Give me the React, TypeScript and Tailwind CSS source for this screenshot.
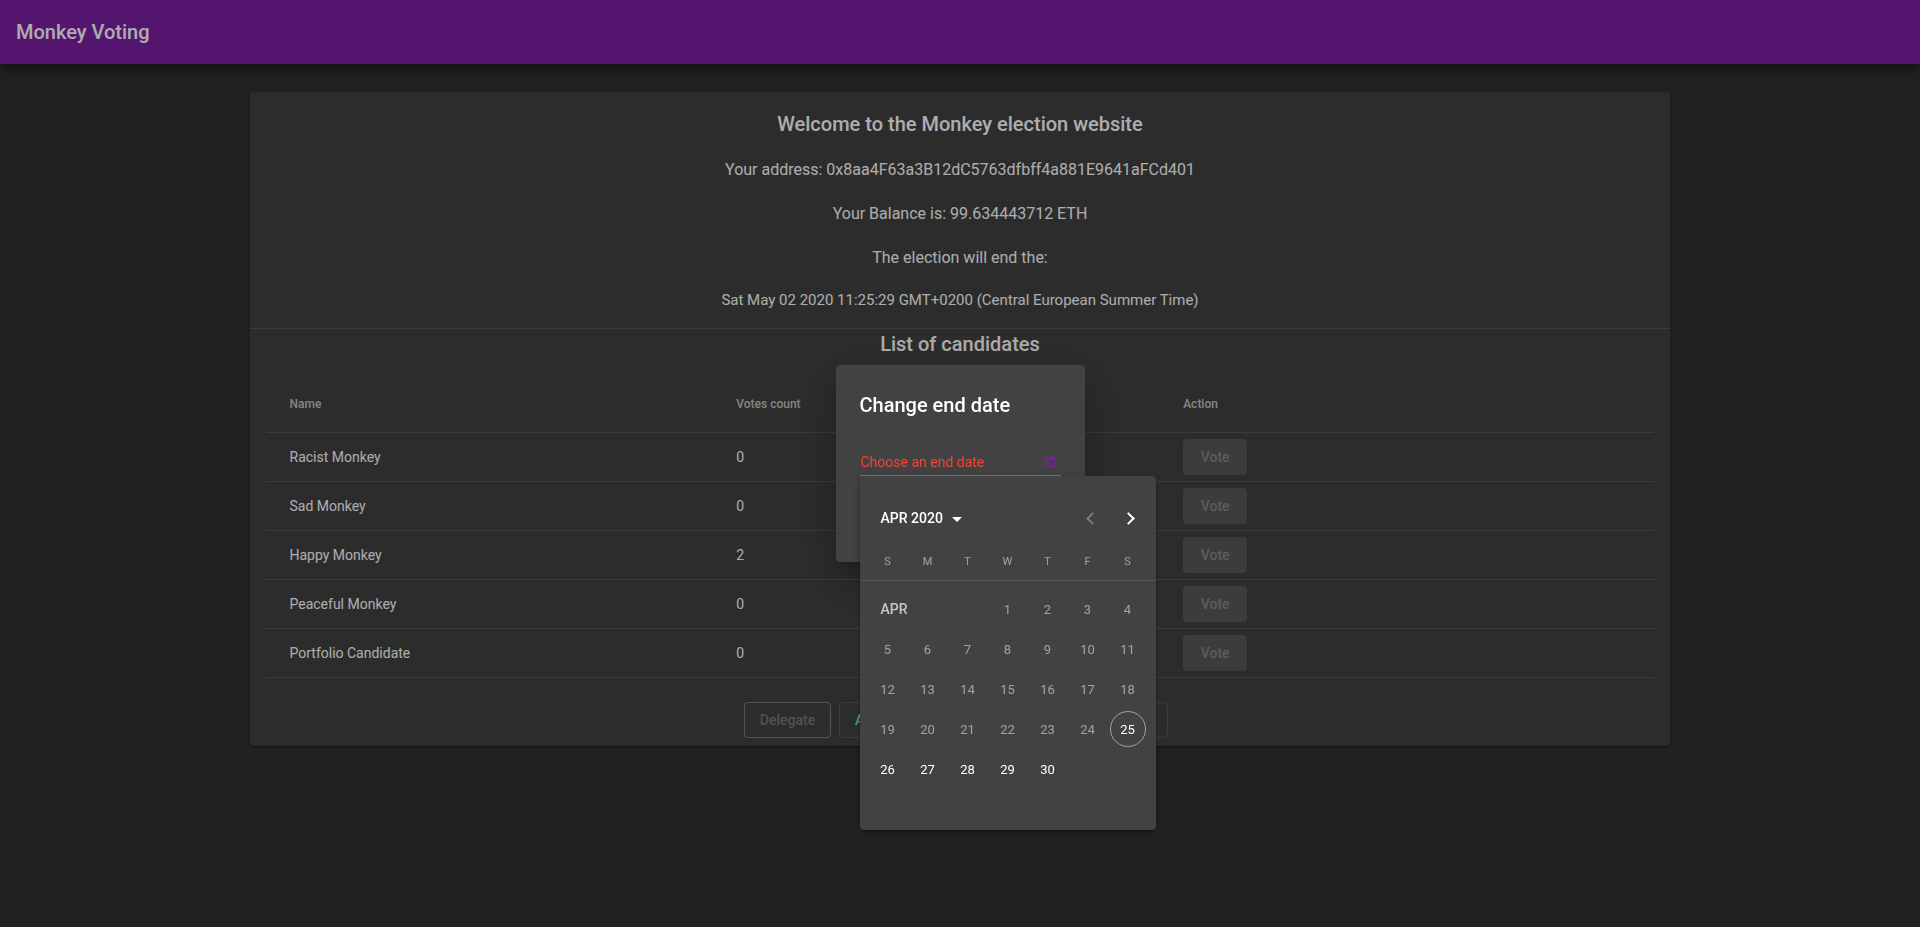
import React from "react";

const candidates: { name: string; votes: number }[] = [
  { name: "Racist Monkey", votes: 0 },
  { name: "Sad Monkey", votes: 0 },
  { name: "Happy Monkey", votes: 2 },
  { name: "Peaceful Monkey", votes: 0 },
  { name: "Portfolio Candidate", votes: 0 },
];

const weekdays = ["S", "M", "T", "W", "T", "F", "S"];
const TODAY = 25;
const days = Array.from({ length: 30 }, (_, i) => i + 1);

function Toolbar() {
  return (
    <header className="relative flex h-16 items-center bg-[#7b1fa2] px-4 shadow-[0_5px_5px_-3px_rgba(0,0,0,.2),0_8px_10px_1px_rgba(0,0,0,.14),0_3px_14px_2px_rgba(0,0,0,.12)]">
      <h1 className="text-[20px] leading-8 font-medium">Monkey Voting</h1>
    </header>
  );
}

function CandidateTable() {
  return (
    <div className="mx-4 mt-[17px]">
      <div className="flex h-14 items-center border-b border-white/12 pr-6 pb-[2px] pl-[23.5px] text-[12px] font-medium text-white/70">
        <div className="flex-1">Name</div>
        <div className="flex-1">Votes count</div>
        <div className="flex-1">Action</div>
      </div>
      {candidates.map((c) => (
        <div key={c.name} className="flex h-[49px] items-center border-b border-white/12 pr-6 pl-[23.5px] text-[14px]">
          <div className="flex-1">{c.name}</div>
          <div className="flex-1">{c.votes}</div>
          <div className="flex-1">
            <button disabled className="block h-9 w-16 rounded bg-white/12 text-[14px] leading-9 font-medium text-white/30">
              Vote
            </button>
          </div>
        </div>
      ))}
    </div>
  );
}

function ElectionCard() {
  return (
    <main className="mx-auto mt-7 h-[654px] w-[1420px] rounded bg-[#424242] pt-4 text-center shadow-[0_2px_1px_-1px_rgba(0,0,0,.2),0_1px_1px_0_rgba(0,0,0,.14),0_1px_3px_0_rgba(0,0,0,.12)]">
      <h2 className="mb-4 text-[20px] leading-8 font-medium">Welcome to the Monkey election website</h2>
      <p className="mb-4 text-[16px] leading-7">Your address: 0x8aa4F63a3B12dC5763dfbff4a881E9641aFCd401</p>
      <p className="mb-4 text-[16px] leading-7">Your Balance is: 99.634443712 ETH</p>
      <p className="mb-4 text-[16px] leading-7">The election will end the:</p>
      <p className="mb-4 text-[15px] leading-6">Sat May 02 2020 11:25:29 GMT+0200 (Central European Summer Time)</p>
      <div className="border-t border-white/12" />
      <h2 className="-mt-px text-[20px] leading-8 font-medium">List of candidates</h2>
      <div className="text-left">
        <CandidateTable />
      </div>
      <div className="mt-6 ml-[494px] flex w-[424px] gap-2 text-[14px] leading-[34px] font-medium">
        <button disabled className="h-9 w-[87px] rounded border border-white/30 text-white/30">
          Delegate
        </button>
        <button className="h-9 w-[134px] rounded border border-white/12 px-[15px] text-left text-[#69f0ae]">Add</button>
        <button className="h-9 flex-1 rounded border border-white/12" />
      </div>
    </main>
  );
}

function Calendar() {
  return (
    <div className="absolute top-[111px] left-6 flex h-[354px] w-[296px] flex-col rounded bg-[#424242] shadow-[0_2px_4px_-1px_rgba(0,0,0,.2),0_4px_5px_0_rgba(0,0,0,.14),0_1px_10px_0_rgba(0,0,0,.12)]">
      <div className="mt-[22px] flex h-10 items-center pr-[6px] pl-[20.5px]">
        <span className="text-[14px] font-medium">APR 2020</span>
        <svg className="mt-[3px] ml-[9.5px] h-[5px] w-[10px]" viewBox="0 0 10 5" fill="#fff">
          <path d="M0 0h10L5 5z" />
        </svg>
        <div className="flex-1" />
        <div className="flex size-10 items-center justify-center">
          <span className="block size-[9px] translate-x-[2px] -rotate-45 border-t-2 border-l-2 border-white/30" />
        </div>
        <div className="flex size-10 items-center justify-center">
          <span className="block size-[9px] -translate-x-[2px] rotate-45 border-t-2 border-r-2 border-white" />
        </div>
      </div>
      <div className="flex h-[43px] items-center border-b border-white/12 pt-[7px] pr-2 pl-[7.5px] text-[11px] text-white/50">
        {weekdays.map((d, i) => (
          <div key={i} className="w-10 text-center">
            {d}
          </div>
        ))}
      </div>
      <div className="mt-2 grid auto-rows-[40px] grid-cols-[repeat(7,40px)] pl-[7.5px] text-[13px]">
        <div className="col-span-3 flex items-center pl-[13px] text-[14px] font-medium text-white/70">APR</div>
        {days.map((d) => (
          <div key={d} className={d < TODAY ? "flex items-center justify-center pt-px text-white/50" : "flex items-center justify-center pt-px text-white"}>
            <span
              className={
                d === TODAY
                  ? "-mt-px ml-px flex size-9 items-center justify-center rounded-full border border-white/50 pt-px pr-px"
                  : "flex size-9 items-center justify-center"
              }
            >
              {d}
            </span>
          </div>
        ))}
      </div>
    </div>
  );
}

function EndDateDialog() {
  return (
    <div className="fixed inset-0 flex items-center justify-center bg-black/32">
      <div className="relative ml-px h-[197px] w-[249px] rounded bg-[#424242] p-6 shadow-[0_11px_15px_-7px_rgba(0,0,0,.2),0_24px_38px_3px_rgba(0,0,0,.14),0_9px_46px_8px_rgba(0,0,0,.12)]">
        <h2 className="-ml-[0.5px] text-[20px] leading-8 font-medium">Change end date</h2>
        <div className="mt-[30px] flex h-[25px] items-center border-b border-[#f44336] pr-1 pb-[2px]">
          <span className="flex-1 pl-[0.5px] text-[14px] text-[#f44336]">Choose an end date</span>
          <svg className="size-[14px]" viewBox="0 0 24 24" fill="#7b1fa2">
            <path d="M19 3h-1V1h-2v2H8V1H6v2H5c-1.11 0-1.99.9-1.99 2L3 19c0 1.1.89 2 2 2h14c1.1 0 2-.9 2-2V5c0-1.1-.9-2-2-2zm0 16H5V8h14v11zM7 10h5v5H7z" />
          </svg>
        </div>
        <Calendar />
      </div>
    </div>
  );
}

export default function App() {
  return (
    <div className="h-[927px] overflow-hidden bg-[#313131] font-['Roboto',sans-serif] text-white">
      <Toolbar />
      <ElectionCard />
      <EndDateDialog />
    </div>
  );
}
